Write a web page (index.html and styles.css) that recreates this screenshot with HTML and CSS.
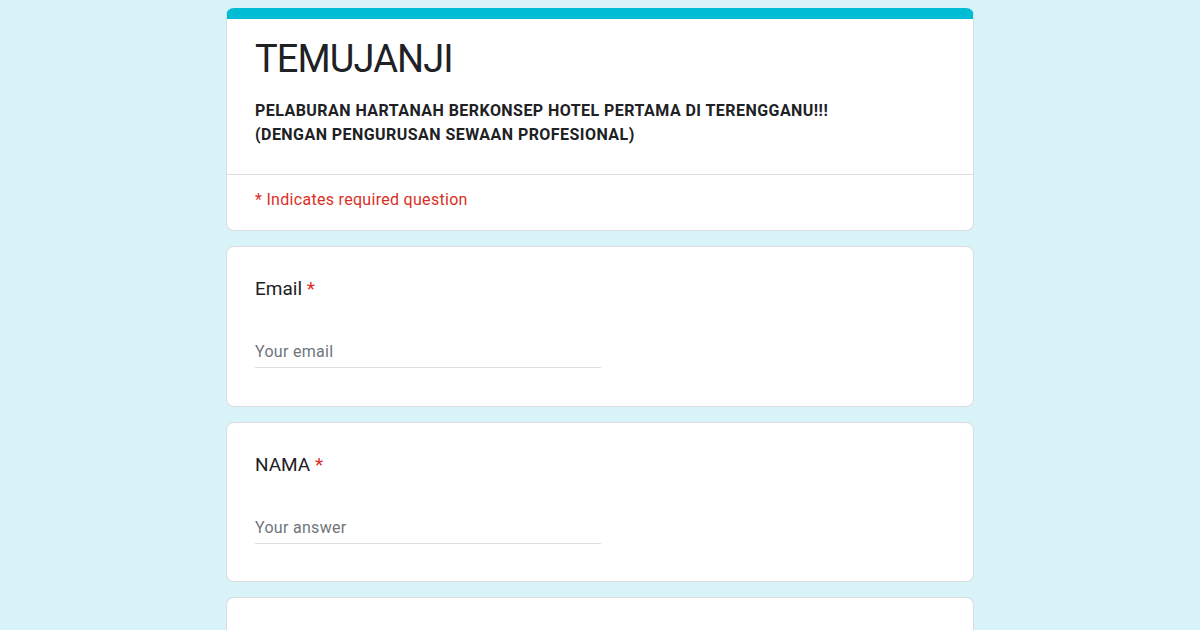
FILE: index.html
```html
<!DOCTYPE html>
<html lang="ms">
<head>
<meta charset="utf-8">
<title>TEMUJANJI</title>
<link rel="stylesheet" href="styles.css">
</head>
<body>
<main class="form">
  <section class="card header-card">
    <div class="header-main">
      <h1 class="title">TEMUJANJI</h1>
      <p class="desc">PELABURAN HARTANAH BERKONSEP HOTEL PERTAMA DI TERENGGANU!!!<br>(DENGAN PENGURUSAN SEWAAN PROFESIONAL)</p>
    </div>
    <div class="header-note">* Indicates required question</div>
  </section>
  <section class="card question">
    <div class="q-label">Email <span class="req">*</span></div>
    <div class="q-input">Your email</div>
  </section>
  <section class="card question">
    <div class="q-label">NAMA <span class="req">*</span></div>
    <div class="q-input">Your answer</div>
  </section>
  <section class="card question"></section>
</main>
</body>
</html>
```
FILE: styles.css
```css
html, body {
  margin: 0;
  padding: 0;
}
body {
  background: #d9f4f8;
  font-family: Roboto, "Liberation Sans", Arial, sans-serif;
  color: #202124;
  padding-top: 8px;
}
.form {
  width: 748px;
  margin: 0 auto;
  display: flex;
  flex-direction: column;
  gap: 15px;
}
.card {
  background: #fff;
  border: 1px solid #dadce0;
  border-radius: 8px;
  box-sizing: border-box;
}
.header-card {
  border-top: 11px solid #00bcd4;
}
.header-main {
  padding: 14px 28px 27px;
  border-bottom: 1px solid #dadce0;
}
.title {
  margin: 0;
  font-weight: 400;
  font-size: 38px;
  line-height: 52px;
  letter-spacing: -0.9px;
  color: #202124;
}
.desc {
  margin: 14px 0 0;
  font-weight: 700;
  font-size: 16px;
  line-height: 24px;
  letter-spacing: 0.45px;
  color: #202124;
}
.header-note {
  padding: 13px 28px 18px;
  font-size: 16px;
  line-height: 24px;
  color: #d93025;
  letter-spacing: 0.3px;
}
.question {
  height: 160.5px;
  padding: 28px 28px 0;
}
.q-label {
  font-size: 19px;
  line-height: 28px;
  color: #202124;
}
.req {
  color: #d93025;
}
.q-input {
  margin-top: 37px;
  width: 346px;
  font-size: 16px;
  line-height: 24px;
  color: #70757a;
  letter-spacing: 0.3px;
  padding-bottom: 3px;
  border-bottom: 1px solid #e0e0e0;
}
```
